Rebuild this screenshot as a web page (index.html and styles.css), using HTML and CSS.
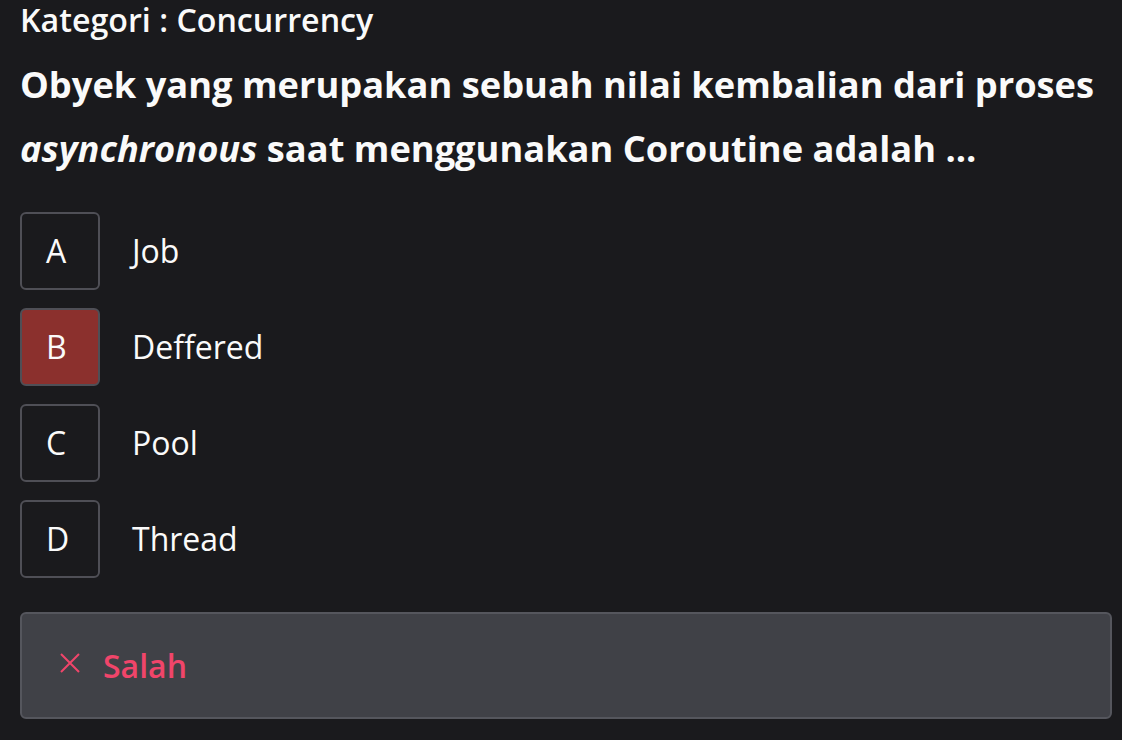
FILE: index.html
```html
<!DOCTYPE html>
<html lang="id">
<head>
<meta charset="utf-8">
<title>Kuis</title>
<link rel="stylesheet" href="styles.css">
</head>
<body>
<main class="quiz">
  <div class="category">Kategori : Concurrency</div>
  <h1 class="question">Obyek yang merupakan sebuah nilai kembalian dari proses <em>asynchronous</em> saat menggunakan Coroutine adalah ...</h1>
  <ul class="options">
    <li class="option"><span class="key">A</span><span class="label">Job</span></li>
    <li class="option option-wrong"><span class="key">B</span><span class="label">Deffered</span></li>
    <li class="option"><span class="key">C</span><span class="label">Pool</span></li>
    <li class="option"><span class="key">D</span><span class="label">Thread</span></li>
  </ul>
  <div class="result">
    <svg class="result-icon" viewBox="0 0 20 20" width="20" height="20" aria-hidden="true">
      <path d="M1 1 L19 19 M19 1 L1 19" stroke="currentColor" stroke-width="2" fill="none" stroke-linecap="butt"/>
    </svg>
    <span class="result-text">Salah</span>
  </div>
</main>
</body>
</html>
```

FILE: styles.css
```css
* { box-sizing: border-box; }
html, body {
  margin: 0;
  padding: 0;
  background: #1a1a1d;
}
body {
  font-family: "Open Sans", "Noto Sans", sans-serif;
  color: #fafafa;
}
.quiz {
  padding: 0 10px 0 20px;
}
.category {
  font-size: 32.2px;
  font-weight: 600;
  line-height: 40px;
}
.question {
  margin: 12px 0 0;
  font-size: 36.25px;
  font-weight: 700;
  line-height: 64px;
}
.question em {
  font-style: italic;
}
.options {
  list-style: none;
  margin: 32px 0 0;
  padding: 0;
  display: flex;
  flex-direction: column;
  gap: 18px;
}
.option {
  display: flex;
  align-items: center;
  gap: 32px;
}
.key {
  width: 80px;
  height: 78px;
  border: 2px solid #4f4f56;
  border-radius: 6px;
  display: flex;
  align-items: center;
  justify-content: flex-start;
  padding-left: 24px;
  font-size: 32px;
  font-weight: 400;
  line-height: 1;
}
.option-wrong .key {
  background: #8b302d;
}
.label {
  font-size: 32px;
  font-weight: 400;
  line-height: 1;
}
.result {
  margin-top: 34px;
  height: 107px;
  background: #404147;
  border: 2px solid #55565d;
  border-radius: 6px;
  display: flex;
  align-items: center;
  padding-left: 38px;
  gap: 23px;
  color: #f0456a;
}
.result-icon {
  flex: none;
  margin-top: -6px;
}
.result-text {
  font-size: 32px;
  font-weight: 600;
  line-height: 1;
}
```
